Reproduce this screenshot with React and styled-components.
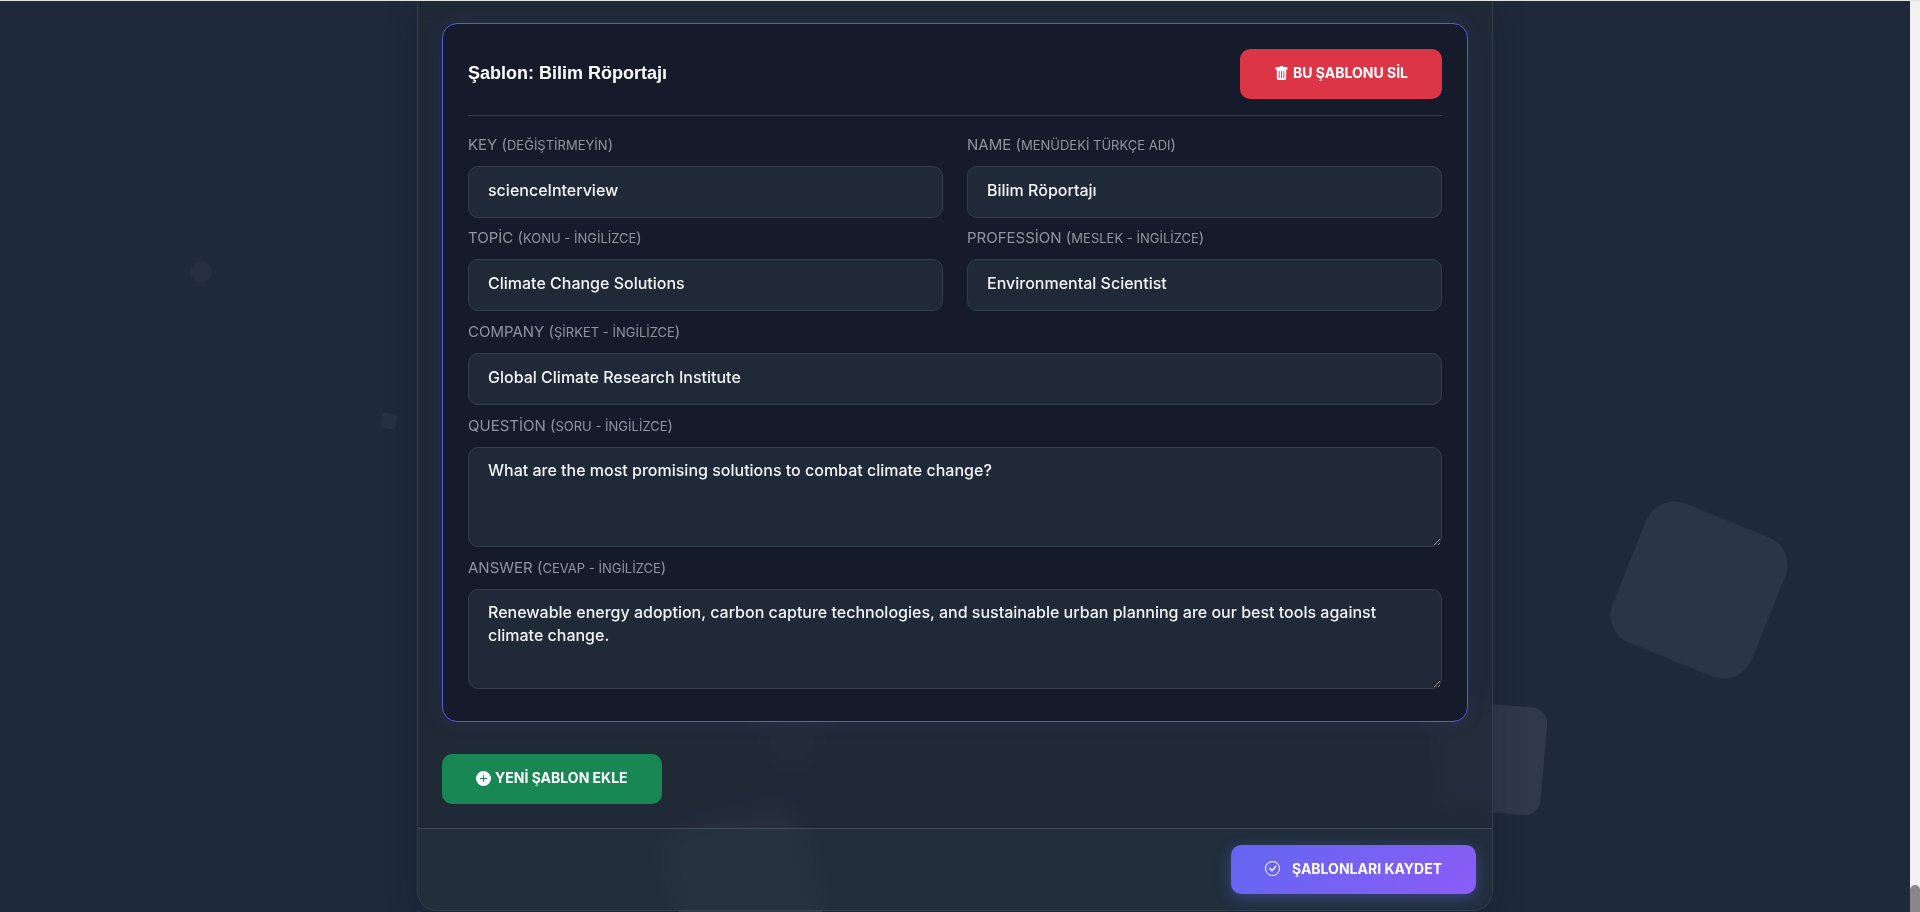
import React from "react";
import styled, { createGlobalStyle, css } from "styled-components";
import { BsTrashFill, BsPlusCircleFill, BsCheckCircle } from "react-icons/bs";

const uiFont = `Inter, "Noto Sans", sans-serif`;

const GlobalStyle = createGlobalStyle`
  *, *::before, *::after { box-sizing: border-box; }
  body { margin: 0; background: #1e293b; font-family: ${uiFont}; }
`;

const Page = styled.div`
  display: flex;
  min-height: 100vh;
  border-top: 1px solid #dfe5e0;
  background: #1e293b;
`;

const Main = styled.main`
  position: relative;
  flex: 1;
  min-width: 0;
  padding: 0 16px 1px;
  overflow: hidden;
`;

const ScrollTrack = styled.div`
  display: flex;
  flex-direction: column;
  justify-content: flex-end;
  width: 10px;
  background: #f1f1f1;
`;

const ScrollThumb = styled.div`
  height: 27px;
  border-radius: 5px 5px 0 0;
  background: #888888;
`;

const Shape = styled.span`
  position: absolute;
  left: ${(p) => p.$left};
  top: ${(p) => p.$top};
  width: ${(p) => p.$size}px;
  height: ${(p) => p.$size}px;
  border-radius: ${(p) => p.$radius || "20%"};
  background: rgba(${(p) => p.$tint || "255, 255, 255"}, ${(p) => p.$alpha});
  transform: translate(-50%, -50%) rotate(${(p) => p.$turn || 0}deg);
`;

const Card = styled.form`
  position: relative;
  max-width: 1076px;
  margin: 0 auto;
  border: 1px solid #343f4d;
  border-top: 0;
  border-radius: 0 0 20px 20px;
  background: rgba(33, 41, 54, 0.8);
  backdrop-filter: blur(10px);
  box-shadow: 0 8px 32px rgba(12, 24, 34, 0.3);
`;

const CardBody = styled.div`
  padding: 22px 24px 24px;
`;

const CardFooter = styled.footer`
  display: flex;
  justify-content: flex-end;
  padding: 16px;
  border-top: 1px solid #414a57;
  border-radius: 0 0 20px 20px;
  background: rgba(40, 60, 70, 0.3);
`;

const Template = styled.section`
  margin-bottom: 32px;
  padding: 25px 25px 32px;
  border: 1px solid #5a5cd6;
  border-radius: 15px;
  background: #151b2a;
  box-shadow: 0 0 20px rgba(99, 102, 241, 0.1);
`;

const TemplateHeader = styled.header`
  display: flex;
  align-items: center;
  justify-content: space-between;
  padding-bottom: 16px;
  border-bottom: 1px solid #353c49;
`;

const TemplateTitle = styled.h2`
  margin: 0;
  padding-bottom: 2px;
  color: #ffffff;
  font: bold 18px/24px "Liberation Sans", Arial, sans-serif;
`;

const Fields = styled.div`
  display: flex;
  flex-direction: column;
  gap: 11px;
  padding-top: 19px;
`;

const FieldRow = styled.div`
  display: grid;
  grid-template-columns: 1fr 1fr;
  gap: 10px 24px;
`;

const FieldBox = styled.div`
  display: flex;
  flex-direction: column;
`;

const Label = styled.label`
  height: 20px;
  margin-bottom: 11px;
  color: #8f949f;
  font-size: 15px;
  line-height: 19px;

  small {
    font-size: 13px;
  }
`;

const control = css`
  width: 100%;
  border: 1px solid #343d4b;
  border-radius: 10px;
  background: #202937;
  color: #f3f4f6;
  font: 500 16px/23px ${uiFont};
  outline: none;
`;

const TextInput = styled.input`
  ${control}
  height: 52px;
  padding: 11px 19px 16px;
`;

const TextArea = styled.textarea`
  ${control}
  display: block;
  height: 100px;
  padding: 11px 19px;
  resize: vertical;
`;

const tones = {
  danger: css`
    background: #dc3545;
  `,
  success: css`
    background: #198754;
  `,
  primary: css`
    background: linear-gradient(135deg, #6366f1, #8b5cf6);
    box-shadow: 0 4px 15px rgba(99, 102, 241, 0.4);
  `,
};

const Button = styled.button`
  display: inline-flex;
  align-items: center;
  gap: ${(p) => (p.$tone === "primary" ? 12 : 4)}px;
  height: ${(p) => (p.$tone === "primary" ? 49 : 50)}px;
  padding: 0 34px 2px;
  border: 0;
  border-radius: 10px;
  color: #ffffff;
  font: 700 14px/20px ${uiFont};
  white-space: nowrap;
  cursor: pointer;
  ${(p) => tones[p.$tone]}

  svg {
    width: 15px;
    height: 15px;
  }
`;

function Field({ id, name, hint, value, multiline }) {
  const Control = multiline ? TextArea : TextInput;
  return (
    <FieldBox>
      <Label htmlFor={id}>
        {name} (<small>{hint}</small>)
      </Label>
      <Control id={id} name={id} defaultValue={value} spellCheck={false} />
    </FieldBox>
  );
}

export default function App() {
  return (
    <>
      <GlobalStyle />
      <Page lang="tr">
        <Main>
          <Shape $left="201px" $top="271px" $size={21} $radius="50%" $alpha={0.03} />
          <Shape $left="389px" $top="420px" $size={15} $turn={10} $alpha={0.04} />
          <Shape $left="792px" $top="737px" $size={60} $radius="50%" $tint="255, 200, 240" $alpha={0.08} />
          <Shape $left="744px" $top="884px" $size={140} $turn={-15} $tint="255, 190, 240" $alpha={0.16} />
          <Shape $left="1490px" $top="757px" $size={108} $turn={5} $radius="16px" $alpha={0.08} />
          <Shape $left="1699px" $top="589px" $size={150} $turn={22} $tint="230, 255, 240" $alpha={0.06} />

          <Card onSubmit={(e) => e.preventDefault()}>
            <CardBody>
              <Template>
                <TemplateHeader>
                  <TemplateTitle>Şablon: Bilim Röportajı</TemplateTitle>
                  <Button type="button" $tone="danger">
                    <BsTrashFill aria-hidden="true" />
                    BU ŞABLONU SİL
                  </Button>
                </TemplateHeader>
                <Fields>
                  <FieldRow>
                    <Field id="key" name="KEY" hint="DEĞİŞTİRMEYİN" value="scienceInterview" />
                    <Field id="name" name="NAME" hint="MENÜDEKİ TÜRKÇE ADI" value="Bilim Röportajı" />
                    <Field id="topic" name="TOPİC" hint="KONU - İNGİLİZCE" value="Climate Change Solutions" />
                    <Field
                      id="profession"
                      name="PROFESSİON"
                      hint="MESLEK - İNGİLİZCE"
                      value="Environmental Scientist"
                    />
                  </FieldRow>
                  <Field
                    id="company"
                    name="COMPANY"
                    hint="ŞİRKET - İNGİLİZCE"
                    value="Global Climate Research Institute"
                  />
                  <Field
                    id="question"
                    name="QUESTİON"
                    hint="SORU - İNGİLİZCE"
                    value="What are the most promising solutions to combat climate change?"
                    multiline
                  />
                  <Field
                    id="answer"
                    name="ANSWER"
                    hint="CEVAP - İNGİLİZCE"
                    value="Renewable energy adoption, carbon capture technologies, and sustainable urban planning are our best tools against climate change."
                    multiline
                  />
                </Fields>
              </Template>
              <Button type="button" $tone="success">
                <BsPlusCircleFill aria-hidden="true" />
                YENİ ŞABLON EKLE
              </Button>
            </CardBody>
            <CardFooter>
              <Button type="submit" $tone="primary">
                <BsCheckCircle aria-hidden="true" />
                ŞABLONLARI KAYDET
              </Button>
            </CardFooter>
          </Card>
        </Main>
        <ScrollTrack aria-hidden="true">
          <ScrollThumb />
        </ScrollTrack>
      </Page>
    </>
  );
}
